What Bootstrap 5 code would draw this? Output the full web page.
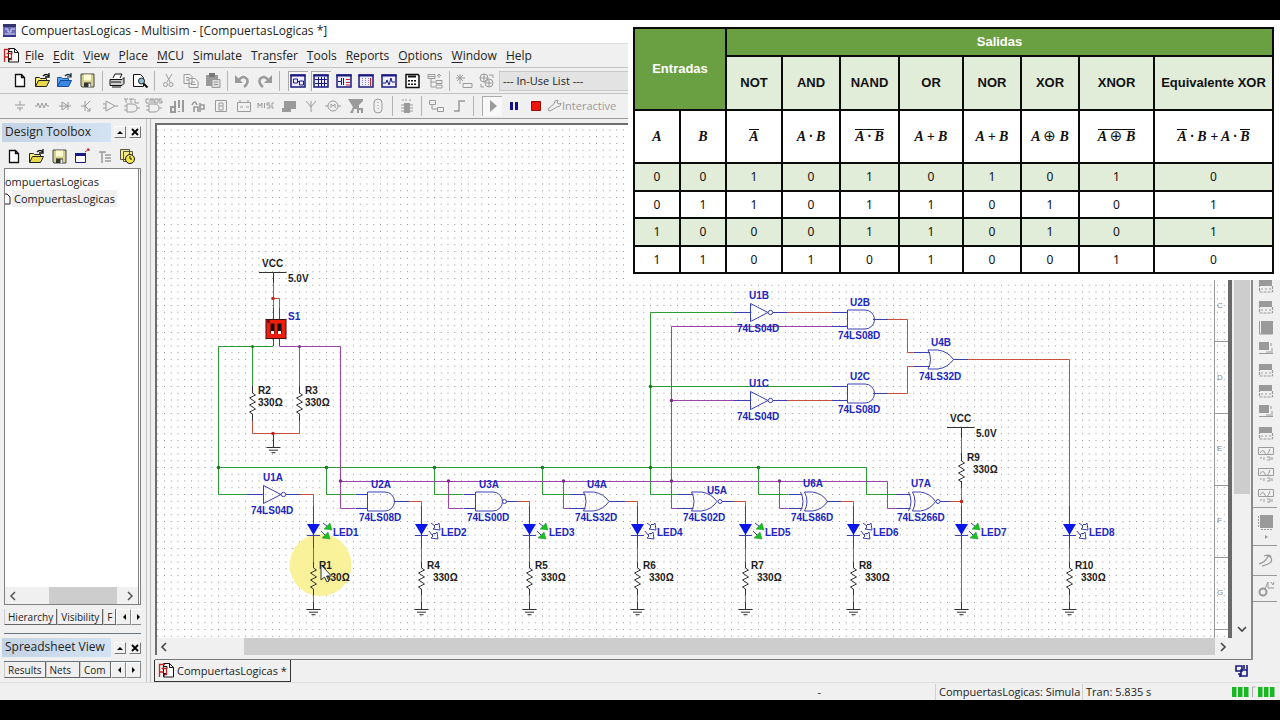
<!DOCTYPE html>
<html lang="es">
<head>
<meta charset="utf-8">
<meta name="viewport" content="width=device-width, initial-scale=1">
<title>CompuertasLogicas - Multisim</title>
<link rel="stylesheet" href="https://cdn.jsdelivr.net/npm/bootstrap@5.3.0/dist/css/bootstrap.min.css">
<style>
:root{--face:#f0f0f0;--edge:#a0a0a0;--dark:#6b6b6b}
body{background:#000;font:12px/16px "Open Sans","Noto Sans",sans-serif;color:#222;padding:20px 0}
button,select,.mnu a{font:inherit;color:inherit}
button{border:0;background:none;padding:0}
svg{display:block;flex:none}
.app{height:calc(100vh - 40px);background:var(--face)}
.titlebar{background:#fff;height:23px;gap:3px;padding:0 2px}
.mnu{height:26px;border-top:1px solid #ddd;border-bottom:1px solid #c4c4c4;padding-left:3px}
.mnu a{text-decoration:none;padding:0 4px 0 5px}
.mnu u{text-underline-offset:2px}
.bar1{height:26px;border-bottom:1px solid #c4c4c4}
.bar2{height:24px}
.tb{display:flex;align-items:center;justify-content:space-between;height:22px;flex:none}
.tb button{width:20px;height:20px;display:flex;align-items:center;justify-content:center}
.sep{width:1px;height:20px;background:#b4b4b4;flex:none}
.tb .down{box-shadow:inset 1px 1px 0 #aaa;background:#f8f8f8}
.ink{color:#111}.off{color:#9a9a9a}
.t4{width:88px;margin-left:10px}.t2{width:43px}.t3{width:64px}.t7{width:157px}.t17{width:378px;margin-left:10px}
.inuse{width:130px;height:20px;border:1px solid #c8c8c8;background:#e3e3e3;border-radius:0;font-size:11px;line-height:16px;padding:0 3px;margin-left:2px;appearance:none}
.work{border-top:1px solid #9c9c9c}
.fine{font-size:11px}
.dock{width:147px;flex:none;border-right:1px solid #c2c2c2;padding:4px 5px 0 4px}
.dock-title{height:19px;gap:3px}
.dock-title .cap{background:linear-gradient(90deg,#c3d3e4,#d3e3f4);height:19px;margin-left:-2px;padding-left:3px;line-height:18px}
.mini{width:12px;height:12px;background:var(--face);border:1px solid #fff;border-right-color:#777;border-bottom-color:#777;display:flex;align-items:center;justify-content:center}
.treebox{background:#fff;border:1px solid #808080;border-right:3px double #808080}
.tree{font-size:11px;line-height:17px;white-space:nowrap;overflow:hidden}
.tree span.sel{background:var(--face);padding:0 2px}
.hs{height:17px;background:var(--face);display:flex;align-items:center;flex:none}
.thumb{background:#cdcdcd}
.tabs{font-size:10px;line-height:14px}
.tabs button{height:16px;padding:0 3px;border:1px solid #666;border-top:0;border-left-color:#ccc;white-space:nowrap}
.arr{width:15px;height:14px;border:1px solid #fff!important;border-right-color:#888!important;border-bottom-color:#888!important;display:flex;align-items:center;justify-content:center;padding:0!important;flex:none}
.gut{width:4px;flex:none;border-right:1px solid #bbb}
.sheetbox{border:2px solid #6e6e6e;border-right:0;border-bottom:0;background:#fff;min-height:0}
.sheet{overflow:hidden;border-right:4px solid #6a6a6a}
.vs{width:19px;background:var(--face);flex:none}
.doc{border-right:2px solid #8a8a8a;min-width:0;margin-top:4px}
.doctab{border:1px solid #333!important;border-top:0!important;height:22px;padding:0 3px!important;gap:2px;width:137px;margin-left:-1px;display:flex;align-items:center}
.status{height:18px;border-top:1px solid #ddd}
.status div{border-left:1px solid #d0d0d0;height:16px;overflow:hidden;white-space:nowrap;padding-left:3px}
.rdock{width:27px;flex:none;padding-top:157px}
.rdock button{width:18px;height:21px;margin-left:4px;display:flex;align-items:center;justify-content:center;flex:none}
.rdock hr{margin:0 3px 1px 0;border-color:#999;opacity:1}
.truth{top:0;right:0;width:652px;height:260px;background:#fff;padding:7px 6px 0 5px}
.truth table{table-layout:fixed;width:641px;border-collapse:collapse;text-align:center}
.truth td,.truth th{border:2px solid #0a0a0a;padding:0;vertical-align:middle;color:#111}
.truth .hd{background:#6ba042;color:#fff}
.truth th{font:bold 13px/16px "Liberation Sans",Arial,sans-serif}
.truth .gate{background:#e2edd9;height:54px;white-space:nowrap}
.truth .fx th{height:53px;font:italic bold 14px/16px "Liberation Serif",serif}
.truth tbody td{height:27px;font:12px/16px "Noto Sans",sans-serif}
.truth tbody tr:nth-child(odd) td{background:#e2edd9;height:28px}
.ov{border-top:1px solid #111;display:inline-block;line-height:14px}
.truth i{font:normal 15px/13px "DejaVu Sans",sans-serif}
.sch text{font:bold 10px "Liberation Sans",Arial,sans-serif}
.k,.b,.r,.g,.p{fill:none}
.k{stroke:#333}.b{stroke:#3a40b0}.r{stroke:#c9503c}.g{stroke:#2c9c34}.p{stroke:#9c45a8}
.bt{fill:#2026c0}.kt{fill:#1c1c1c}
.sch .zone text{font:8px "Liberation Sans",Arial,sans-serif}
</style>
</head>
<body>
<svg width="0" height="0" class="position-absolute" aria-hidden="true">
<defs>
<g id="i-ms"><path d="M1 1h13v13H1z" fill="#6a6ab8"/><path d="M1 1l13 0v3H1z" fill="#34346c"/><path d="M3 6h3v3h3V6h4M3 11h10" stroke="#d8d8f4" fill="none"/><path d="M1 12h13v2H1z" fill="#34348c"/></g>
<g id="i-doc2"><path d="M5.500 1.500h6l4 4v9.500h-10zM11.500 1.500v4h4" fill="#fff" stroke="#111"/><path d="M1.500 15V2.500H7M3.500 6.500h5v6h-3M1.500 10h4" fill="none" stroke="#c22" stroke-width="1.300"/><path d="M6 4.500h3v2M6 14.500v-3h2" stroke="#111" fill="none"/></g>
<g id="i-new"><path d="M4.500 2.500h6l3 3v9h-9zM10.500 2.500v3h3" fill="#fff" stroke="#111" stroke-width="1.300"/></g>
<g id="i-open"><path d="M1.500 14.500v-9h4l1 1h6v2" fill="#f6ee80" stroke="#222"/><path d="M1.500 14.500l3-6h11l-3 6z" fill="#e9d94a" stroke="#222"/><path d="M9 4q3-3 6 0M15 1v4h-4" fill="none" stroke="#111" stroke-width="1.300"/></g>
<g id="i-openb"><path d="M1.500 14.500v-9h4l1 1h6v2" fill="#5aa2f0" stroke="#1558a8"/><path d="M1.500 14.500l3-6h11l-3 6z" fill="#3c86e4" stroke="#104c98"/><path d="M9 4q3-3 6 0M15 1v4h-4" fill="none" stroke="#123" stroke-width="1.200"/></g>
<g id="i-save"><path d="M2 2h13v13H3l-1-1z" fill="#d5d290" stroke="#444"/><path d="M5 2.500h7v6H5z" fill="#fffbd0"/><path d="M5 10.500h7V15H5z" fill="#333"/><path d="M9.500 11.500h2V15h-2z" fill="#eee"/></g>
<g id="i-print"><path d="M5 6l2-4h7l-2 4" fill="#fff" stroke="#111"/><path d="M2 7.500h12l2-2v6l-2 2H2z" fill="#ccc" stroke="#111"/><path d="M3 10h10M4 15h9" stroke="#111"/></g>
<g id="i-prev"><path d="M2.500 2.500h7l3 3v9h-10z" fill="#fff" stroke="#111"/><circle cx="10.500" cy="9" r="3" fill="#8cc0d4" stroke="#222"/><path d="M12.500 11.500l4 4" stroke="#111" stroke-width="2"/></g>
<g id="i-cut" fill="none" stroke="currentColor"><path d="M6 2l4 8M12 2l-5 8"/><circle cx="5.500" cy="12.500" r="2"/><circle cx="11" cy="12.500" r="2"/></g>
<g id="i-copy" fill="#f4f4f4" stroke="currentColor"><path d="M2 2.500h6l2 2v7H2zM7 6.500h6l3 3v6H7zM9 10h4M9 12.500h5M4 5.500h3M4 8h3"/></g>
<g id="i-paste"><path d="M2 3h12v11H2z" fill="currentColor"/><path d="M5 1h6v4H5z" fill="#777"/><path d="M8 7.500h8v8H8z" fill="#ddd" stroke="currentColor"/><path d="M10 10h4M10 12.500h4" stroke="currentColor"/></g>
<g id="i-undo"><path d="M5 9q5-7 9-2q2 4-3 8" fill="none" stroke="currentColor" stroke-width="2.500"/><path d="M2 3v8h8z" fill="currentColor"/></g>
<g id="i-w1"><path d="M2 3h14v12H2z" fill="#eef" stroke="#1a1a80" stroke-width="1.500"/><path d="M1.500 2.500h15v2h-15z" fill="#1a1a80"/></g>
<g id="i-calc"><path d="M3 2.500h12l1 1v12H3z" fill="#fff" stroke="#111" stroke-width="1.500"/><path d="M5 4.500h8" stroke="#111" stroke-width="2"/><path d="M5 8h2v1.500H5zM8 8h2v1.500H8zM11 8h2v1.500h-2zM5 11.500h2V13H5zM8 11.500h2V13H8zM11 11.500h2V13h-2z" fill="#111"/></g>
<g id="i-hier" fill="none" stroke="currentColor"><path d="M2 2.500h7v4H2zM2 4.500h7M5 7v8h4M5 10h4M10 8.500h6v3h-6zM10 13h6v3h-6zM13 6V2M11 4l2-2 2 2"/></g>
<g id="i-spark" fill="none" stroke="currentColor"><path d="M5 2v10M1 6h9M2 3l6 6M8 3L2 9M8 11.500h9v4H8z"/></g>
<g id="i-gear" fill="none" stroke="currentColor"><circle cx="6" cy="6" r="4"/><circle cx="11" cy="11" r="4"/><path d="M2 6h8M6 2v8M8 11h6M11 8v7M11 3h4v3M3 12v3h3"/></g>
<g id="i-and" fill="none" stroke="currentColor"><path d="M4 7h5q5 0 5 4t-5 4H4zM1 9h3M1 13h3M14 11h3"/></g>
<g id="res" class="k"><path d="M0 0l3 2-6 3 6 4-6 3 6 4-6 3 3 2"/></g>
<g id="gnd" class="k"><path d="M0 0V7.500M-7 7.500H7M-4.500 10.200H4.500M-2 12.700H2"/></g>
<g id="diode"><path class="b" d="M0-18V25M-6.500 11.500H6.500"/><path d="M-6.500 0H6.500L0 11z" style="fill:#0a16e8"/></g>
<g id="drop"><path class="r" d="M0 24V38"/><path class="k" d="M0 38V44M0 65V71"/><use href="#res" y="44"/><path class="r" d="M0 71V78"/><use href="#gnd" y="78"/></g>
<g id="on"><path class="b" d="M10-2l5 4M8 6l4 4"/><path d="M19 5l-8-1 6-6zM17 14l-8-1 6-6z" style="fill:#18c020;stroke:#0a7a20;stroke-width:.4"/></g>
<g id="off"><path class="b" d="M10-2l4 3M8 6l3 4M19 5l-7-1 2-2-1-1 2-2 1 1 2-2zM17 14l-7-1 2-2-1-1 2-2 1 1 2-2z"/></g>
<g id="not" class="b"><path d="M-17 0H0M0-9V9L17.500 0zM22.500 0H37"/><circle cx="20" cy="0" r="2.200" fill="#fff"/></g>
<g id="and" class="b"><path d="M-12-7H0M-12 7H0M0-9.500H17.500A9.500 9.500 0 0 1 17.500 9.500H0z"/></g>
<g id="or" class="b"><path d="M-14-7H2M-14 7H2M0-9.500H10Q20-8 25.500 0Q20 8 10 9.500H0Q5 0 0-9.500z"/></g>
<g id="xor" class="b"><path d="M-12-7H2M-12 7H2M4-9.500H12Q22-8 27 0Q22 8 12 9.500H4Q9 0 4-9.500zM0-9.500Q5 0 0 9.500"/></g>
<pattern id="dots" x="218" y="467" width="6.750" height="6.750" patternUnits="userSpaceOnUse"><rect width="1" height="1" fill="#909090"/></pattern>
<g id="ins"><path d="M2 3h13v6H2z" fill="currentColor"/><path d="M2.500 3v12h13M4 12h2M8 12h2M12 12h2M15.500 9v6" stroke="currentColor" fill="none" stroke-width="1.200" stroke-dasharray="3 1"/></g>
<g id="ins2"><path d="M2 2h10v8H2z" fill="currentColor"/><path d="M2 13.500h14M14 3v3M15 8v5M9 12h5" stroke="currentColor" fill="none"/></g>
<g id="ins3" fill="none" stroke="currentColor"><path d="M1.500 2.500h15v7h-15zM3 8q3-5 5 0t5-4M3 13h2M7 12v3M10 12h3v3h-3M15 12v3"/></g>
</defs></svg>

<div class="app d-flex flex-column position-relative overflow-hidden">
<header class="titlebar d-flex align-items-center"><svg width="16" height="16"><use href="#i-ms"/></svg><span>CompuertasLogicas - Multisim - [CompuertasLogicas *]</span></header>
<nav class="mnu d-flex align-items-center"><svg width="17" height="17"><use href="#i-doc2"/></svg>
<a href="#"><u>F</u>ile</a><a href="#"><u>E</u>dit</a><a href="#"><u>V</u>iew</a><a href="#"><u>P</u>lace</a><a href="#"><u>M</u>CU</a><a href="#"><u>S</u>imulate</a><a href="#">Tra<u>n</u>sfer</a><a href="#"><u>T</u>ools</a><a href="#"><u>R</u>eports</a><a href="#"><u>O</u>ptions</a><a href="#"><u>W</u>indow</a><a href="#"><u>H</u>elp</a></nav>

<div class="bar1 d-flex align-items-center">
<div class="tb t4 ink"><button aria-label="New"><svg width="18" height="18"><use href="#i-new"/></svg></button><button aria-label="Open"><svg width="18" height="18"><use href="#i-open"/></svg></button><button aria-label="Open sample"><svg width="18" height="18"><use href="#i-openb"/></svg></button><button aria-label="Save"><svg width="18" height="18"><use href="#i-save"/></svg></button></div>
<span class="sep mx-1"></span>
<div class="tb t2 ink"><button aria-label="Print"><svg width="18" height="18"><use href="#i-print"/></svg></button><button aria-label="Preview"><svg width="18" height="18"><use href="#i-prev"/></svg></button></div>
<span class="sep ms-1 me-1"></span>
<div class="tb t3 off"><button aria-label="Cut"><svg width="18" height="18"><use href="#i-cut"/></svg></button><button aria-label="Copy"><svg width="18" height="18"><use href="#i-copy"/></svg></button><button aria-label="Paste"><svg width="18" height="18"><use href="#i-paste"/></svg></button></div>
<span class="sep mx-1"></span>
<div class="tb t2 off"><button aria-label="Undo"><svg width="18" height="18"><use href="#i-undo"/></svg></button><button aria-label="Redo"><svg width="18" height="18"><use href="#i-undo" transform="matrix(-1 0 0 1 18 0)"/></svg></button></div>
<span class="sep ms-1 me-2"></span>
<div class="tb t7 ink"><button class="down" aria-label="Design toolbox"><svg width="18" height="18"><use href="#i-w1"/><path d="M4.500 7h4v4h-4zM10.500 9h4v4h-4zM8 9.500h2" fill="none" stroke="#1a1a80"/></svg></button><button class="down" aria-label="Spreadsheet"><svg width="18" height="18"><use href="#i-w1"/><path d="M3 7.500h12M3 11.500h12M6.500 5v10M9.500 5v10M12.500 5v10" stroke="#1a1a80"/></svg></button><button aria-label="Netlist"><svg width="18" height="18"><use href="#i-w1"/><path d="M3 9.500h3M6.500 6v7M8.500 6v7" stroke="#1a1a80"/><path d="M11 7.500h4M11 10.500h4M11 13h4" stroke="#c22"/></svg></button><button aria-label="Grapher"><svg width="18" height="18"><use href="#i-w1"/><path d="M5.500 6v8M8.500 6v8M11.500 6v8" stroke="#88b" stroke-dasharray="1 1"/><path d="M13.500 6v8" stroke="#c22"/></svg></button><button aria-label="Postprocessor"><svg width="18" height="18"><use href="#i-w1"/><path d="M3 11h3l1-3 2 5 2-7 1 4h3" fill="none" stroke="#1a1a80"/></svg></button><button aria-label="Calculator"><svg width="18" height="18"><use href="#i-calc"/></svg></button><button class="off" aria-label="Parent sheet"><svg width="18" height="18"><use href="#i-hier"/></svg></button></div>
<span class="sep mx-1"></span>
<div class="tb t2 off"><button aria-label="Component wizard"><svg width="18" height="18"><use href="#i-spark"/></svg></button><button aria-label="Database manager"><svg width="18" height="18"><use href="#i-gear"/></svg></button></div>
<select class="inuse" aria-label="In-Use List"><option>--- In-Use List ---</option></select>
</div>

<div class="bar2 d-flex align-items-center off">
<div class="tb t17">
<button aria-label="Source"><svg width="18" height="18"><path d="M9 4v4M4 8h10M6 11h6M9 11v3" stroke="currentColor" fill="none"/></svg></button>
<button aria-label="Basic"><svg width="18" height="18"><path d="M2 9h2l1-3 2 5 2-5 2 5 2-5 1 3h2" stroke="currentColor" fill="none"/></svg></button>
<button aria-label="Diode"><svg width="18" height="18"><path d="M3 9h12M6 5v8l6-4zM12 5v8" stroke="currentColor" fill="none"/></svg></button>
<button aria-label="Transistor"><svg width="18" height="18"><path d="M3 9h4M7 4v10M7 9l5-5M7 9l5 5M12 11v3h-3" stroke="currentColor" fill="none"/></svg></button>
<button aria-label="Analog"><svg width="18" height="18"><path d="M5 4v10l9-5zM2 7h3M2 11h3M14 9h3" stroke="currentColor" fill="none"/></svg></button>
<button aria-label="TTL"><svg width="18" height="18"><path d="M1 2h4M3 2v4M6 2h5M8 2v4M12 2v4h4" stroke="currentColor" fill="none"/><use href="#i-and"/></svg></button>
<button aria-label="CMOS"><svg width="18" height="18"><path d="M1 2v4h3M1 2h3M5 6V2h4v4M7 2v4M10 2h3v4h-3zM17 2h-3v2h3v2h-3" stroke="currentColor" fill="none"/><use href="#i-and"/></svg></button>
<button aria-label="Misc digital"><svg width="18" height="18"><path d="M3 15v-5h4v5zM7 15V4M11 3v8M11 15v-1M15 3v12" stroke="currentColor" fill="none" stroke-width="2"/></svg></button>
<button aria-label="Mixed"><svg width="18" height="18"><path d="M2 8q3-6 5 0M4 15v-5h4v5M10 6v9M10 8h4v4h-4" stroke="currentColor" fill="none" stroke-width="1.600"/></svg></button>
<button aria-label="Indicator"><svg width="18" height="18"><path d="M3.500 3.500h11v11h-11zM7 6h4v3H7zM7 9v4h4V9" stroke="currentColor" fill="none"/></svg></button>
<button aria-label="Power"><svg width="18" height="18"><path d="M2.500 5.500h13v9h-13zM5 3v2M13 3v2M5 10h3M11 10h3" stroke="currentColor" fill="none"/></svg></button>
<button aria-label="Misc"><svg width="18" height="18"><path d="M1 11V6l2 3 2-3v5M7.500 6v5M13 6h-3v2h3v3h-3M17 6h-2v5h2" stroke="currentColor" fill="none"/></svg></button>
<button aria-label="Peripherals"><svg width="18" height="18"><path d="M4 4h12v8H4zM2 11h9v4H2z" fill="currentColor"/></svg></button>
<button aria-label="RF"><svg width="18" height="18"><path d="M9 15V4M4 4l5 6 5-6" stroke="currentColor" fill="none"/></svg></button>
<button aria-label="Electromechanical"><svg width="18" height="18"><circle cx="9" cy="9" r="5" fill="none" stroke="currentColor"/><path d="M1 9h3M14 9h3M7 11V7l2 2 2-2v4" stroke="currentColor" fill="none"/></svg></button>
<button aria-label="NI"><svg width="18" height="18"><path d="M1 2h15v2l-4 4v3h4v5h-2v-3h-2v3h-2v-4H7l-1 4H3l3-6z" fill="currentColor"/></svg></button>
<button aria-label="Connector"><svg width="18" height="18"><path d="M9 2q-4 0-4 4v6q0 4 4 4t4-4V6q0-4-4-4zM9 5v1M9 8v1M9 11v1" stroke="currentColor" fill="none"/></svg></button>
</div>
<span class="sep mx-1"></span>
<div class="tb"><button aria-label="MCU"><svg width="18" height="18"><path d="M6 6h6v10H6z" fill="currentColor"/><path d="M3 8h12M3 11h12M3 14h12M5 2v2M8 2v2M12 2v2" stroke="currentColor"/></svg></button></div>
<span class="sep mx-1"></span>
<div class="tb t2"><button aria-label="Hierarchical block"><svg width="18" height="18"><path d="M2.500 3.500h6v4h-6zM10.500 10.500h6v4h-6zM5 8v4h5" fill="none" stroke="currentColor"/></svg></button><button aria-label="Bus"><svg width="18" height="18"><path d="M4 14h5V4h6" fill="none" stroke="currentColor" stroke-width="1.500"/></svg></button></div>
<span class="sep ms-1 me-2"></span>
<div class="tb t3"><button class="down" aria-label="Run"><svg width="18" height="18"><path d="M7 3l7 6-7 6z" fill="currentColor"/></svg></button><button aria-label="Pause"><svg width="18" height="18"><path d="M5 5h3v8H5zM10 5h3v8h-3z" fill="#12128c"/></svg></button><button aria-label="Stop"><svg width="18" height="18"><path d="M4.500 4.500h9v9h-9z" fill="#f21408" stroke="#8c1008"/></svg></button></div>
<button class="d-flex align-items-center fine"><svg width="16" height="16"><path d="M4 13l-2-1 1-2 5-4q0-4 4-4l-1 3 2 1 2-1q0 4-4 4z" fill="none" stroke="currentColor"/></svg>Interactive</button>
</div>

<main class="work d-flex flex-grow-1" style="min-height:0">
<aside class="dock d-flex flex-column">
<div class="dock-title d-flex align-items-center"><span class="cap flex-grow-1">Design Toolbox</span><button class="mini" aria-label="Collapse"><svg width="6" height="4"><path d="M0 4l3-3 3 3z"/></svg></button><button class="mini" aria-label="Close"><svg width="8" height="8"><path d="M1 1l6 6M7 1L1 7" stroke="#000" stroke-width="1.800"/></svg></button></div>
<div class="tb ink mt-1" style="width:134px"><button aria-label="New design"><svg width="18" height="18"><use href="#i-new"/></svg></button><button aria-label="Open design"><svg width="18" height="18"><use href="#i-open"/></svg></button><button aria-label="Save design"><svg width="18" height="18"><use href="#i-save"/></svg></button><button aria-label="Close design"><svg width="18" height="18"><path d="M2.500 5.500h10v9h-10z" fill="#fff" stroke="#1a1a80"/><path d="M2 5h11v3H2z" fill="#1a1a80"/><path d="M12 4l4-3M14 1h2v2" stroke="#c22"/></svg></button><button class="off" aria-label="Rename"><svg width="18" height="18"><path d="M3 4h7M6 4v11M9 7h6M9 10h6M9 13h6" stroke="currentColor" fill="none" stroke-width="1.500"/></svg></button><button aria-label="History"><svg width="18" height="18"><path d="M1.500 1.500h9v10h-9zM4.500 3.500h9v10h-9z" fill="#f4ec8a" stroke="#554"/><circle cx="11" cy="11" r="4.500" fill="#f7e94a" stroke="#111"/><path d="M11 8v3h2" stroke="#111" fill="none"/></svg></button></div>
<div class="treebox flex-grow-1 d-flex flex-column">
<div class="tree flex-grow-1 pt-1"><div>ompuertasLogicas</div><div class="d-flex"><svg width="7" height="17"><path d="M0 4h2l3 3v7H0" fill="none" stroke="#222"/></svg><span class="sel">CompuertasLogicas</span></div></div>
<div class="hs"><button aria-label="Left"><svg width="16" height="15"><path d="M10 4L6 8l4 4" fill="none" stroke="#555" stroke-width="1.500"/></svg></button><span class="thumb h-100" style="width:68px;margin:0 auto 0 28px"></span><button aria-label="Right"><svg width="16" height="15"><path d="M6 4l4 4-4 4" fill="none" stroke="#555" stroke-width="1.500"/></svg></button></div>
</div>
<div class="tabs d-flex overflow-hidden mt-1"><button>Hierarchy</button><button>Visibility</button><button class="flex-grow-1 text-start">F</button><button class="arr" aria-label="Previous tab"><svg width="4" height="6"><path d="M4 0v6L1 3z"/></svg></button><button class="arr" aria-label="Next tab"><svg width="4" height="6"><path d="M0 0v6l3-3z"/></svg></button></div>
<div class="border-bottom border-secondary mt-2 mb-1" style="height:1px"></div>
<div class="dock-title d-flex align-items-center"><span class="cap flex-grow-1">Spreadsheet View</span><button class="mini" aria-label="Collapse view"><svg width="6" height="4"><path d="M0 4l3-3 3 3z"/></svg></button><button class="mini" aria-label="Close view"><svg width="8" height="8"><path d="M1 1l6 6M7 1L1 7" stroke="#000" stroke-width="1.800"/></svg></button></div>
<div class="tabs d-flex overflow-hidden mt-1 mb-1 border-top border-secondary"><button>Results</button><button class="pe-2">Nets</button><button class="flex-grow-1 text-start">Com</button><button class="arr" aria-label="Previous view"><svg width="4" height="6"><path d="M4 0v6L1 3z"/></svg></button><button class="arr" aria-label="Next view"><svg width="4" height="6"><path d="M0 0v6l3-3z"/></svg></button></div>
</aside>
<div class="gut"></div>
<section class="d-flex flex-column flex-grow-1 ps-1" style="min-width:0">
<div class="doc d-flex flex-column flex-grow-1" style="min-height:0">
<div class="sheetbox d-flex flex-grow-1">
<div class="sheet flex-grow-1">
<svg class="sch" width="1072" height="520" viewBox="157 125 1072 520">
<rect x="157" y="125" width="1072" height="520" fill="url(#dots)"/>
<circle cx="320.500" cy="565" r="31" fill="#f9f29b"/>
<path d="M1214.500 125V645M1214 341.500h15M1214 413.500h15M1214 485.500h15M1214 557.500h15M1214 629.500h15" stroke="#999"/>
<g class="zone" fill="#888"><text x="1217" y="308">C</text><text x="1217" y="380">D</text><text x="1217" y="451">E</text><text x="1217" y="523">F</text><text x="1217" y="595">G</text></g>
<!-- input nets -->
<path class="g" d="M273 346.500H218.500V494.500H247M252.500 346V386M218 467.500H866.500V494.500H897M326.500 467V494.500H355M434.500 467V494.500H463M542.500 467V494.500H570M650.500 494.500V312.500H734M650.500 494.500H678M758.500 467V494.500H788M650.500 386.500H835"/>
<path class="p" d="M279.500 346.500H340.500V508.500H355M299.500 346V386M340 481.500H887.500V508.500H897M448.500 481V508.500H463M563.500 481V508.500H570M671.500 508.500V326.500H835M671.500 508.500H678M779.500 481V508.500H788M671.500 400.500H734"/>
<!-- power net -->
<path class="r" d="M273.500 283V310M273.500 298.500H279.500V310M252.500 420V433.500H299.500V420M300 494.500H313.500V506M409 501.500H421.500V508M517 501.500H529.500V508M625 501.500H637.500V508M733 501.500H745.500V508M841 501.500H853.500V508M949 501.500H961.500M961.500 438V453M961.500 487V508M961.500 548V602M787 312.500H835M787 400.500H835M888 319.500H907.500V352.500H914M888 393.500H907.500V366.500H914M968 359.500H1069.500V508"/>
<path class="k" d="M259 272.500H286.500M273.500 272V283M273.500 433V440M252.500 386V393M299.500 386V393M252.500 414V421M299.500 414V421M947 427.500H974.500M961.500 427V438M961.500 453V461M961.500 481V488"/>
<path class="b" d="M273.500 308V320M279.500 308V320M273.500 338V346M279.500 338V346M394 501.500H409M506 501.500H517M609 501.500H625M722 501.500H733M827 501.500H841M940 501.500H950M873 319.500H888M873 393.500H888M953 359.500H968M832 312.500H848M832 326.500H848M832 386.500H848M832 400.500H848"/>
<use href="#res" x="252.500" y="393"/><use href="#res" x="299.500" y="393"/><use href="#res" x="961.500" y="461"/><use href="#gnd" x="273.500" y="440"/><use href="#gnd" x="961.500" y="602"/>
<g fill="#157a22"><circle cx="218.500" cy="467.500" r="1.800"/><circle cx="252.500" cy="346.500" r="1.500"/><circle cx="326.500" cy="467.500" r="1.800"/><circle cx="434.500" cy="467.500" r="1.800"/><circle cx="542.500" cy="467.500" r="1.800"/><circle cx="650.500" cy="467.500" r="1.800"/><circle cx="758.500" cy="467.500" r="1.800"/><circle cx="650.500" cy="386.500" r="1.800"/></g>
<g fill="#7b2c88"><circle cx="299.500" cy="346.500" r="1.500"/><circle cx="340.500" cy="481" r="1.800"/><circle cx="448.500" cy="481" r="1.800"/><circle cx="563.500" cy="481" r="1.800"/><circle cx="671.500" cy="481" r="1.800"/><circle cx="779.500" cy="481" r="1.800"/><circle cx="671.500" cy="400.500" r="1.800"/></g>
<g fill="#c62418"><circle cx="273" cy="298.500" r="1.800"/><circle cx="273" cy="433.500" r="1.800"/><circle cx="961.500" cy="501.500" r="1.800"/></g>
<rect x="266" y="319.500" width="20" height="19" fill="#f01c0c" stroke="#401010"/><path d="M270.500 323.500h4v10h-4zM277.500 323.500h4v10h-4z" style="fill:#111"/><path d="M271 331h3v3h-3zM278 331h3v3h-3z" style="fill:#fff"/><circle cx="268.500" cy="321.500" r="1.500" fill="#500"/>
<!-- gates -->
<use href="#not" x="263.500" y="494.500"/><use href="#and" x="367.500" y="501.500"/><use href="#and" x="475.500" y="501.500"/><use href="#or" x="583.500" y="501.500"/><use href="#or" x="691.500" y="501.500"/><use href="#xor" x="800.500" y="501.500"/><use href="#xor" x="908.500" y="501.500"/>
<use href="#not" x="750.500" y="312.500"/><use href="#not" x="750.500" y="400.500"/><use href="#and" x="847.500" y="319.500"/><use href="#and" x="847.500" y="393.500"/><use href="#or" x="928" y="359.500"/>
<g fill="#fff" stroke="#3a40b0"><circle cx="504.500" cy="501.500" r="2"/><circle cx="720" cy="501.500" r="2"/><circle cx="938" cy="501.500" r="2"/></g>
<!-- indicator columns -->
<use href="#diode" x="313.500" y="524"/><use href="#diode" x="421.500" y="524"/><use href="#diode" x="529.500" y="524"/><use href="#diode" x="637.500" y="524"/><use href="#diode" x="745.500" y="524"/><use href="#diode" x="853.500" y="524"/><use href="#diode" x="961.500" y="524"/><use href="#diode" x="1069.500" y="524"/>
<use href="#drop" x="313.500" y="524"/><use href="#drop" x="421.500" y="524"/><use href="#drop" x="529.500" y="524"/><use href="#drop" x="637.500" y="524"/><use href="#drop" x="745.500" y="524"/><use href="#drop" x="853.500" y="524"/><use href="#drop" x="1069.500" y="524"/>
<use href="#on" x="313" y="525"/><use href="#off" x="421" y="525"/><use href="#on" x="529" y="525"/><use href="#off" x="637" y="525"/><use href="#on" x="745" y="525"/><use href="#off" x="853" y="525"/><use href="#on" x="961" y="525"/><use href="#off" x="1069" y="525"/>
<g class="bt"><text x="288" y="320">S1</text><text x="263" y="481">U1A</text><text x="251" y="514">74LS04D</text><text x="371" y="488">U2A</text><text x="359" y="521">74LS08D</text><text x="479" y="488">U3A</text><text x="467" y="521">74LS00D</text><text x="587" y="488">U4A</text><text x="575" y="521">74LS32D</text><text x="707" y="494">U5A</text><text x="683" y="521">74LS02D</text><text x="803" y="487">U6A</text><text x="791" y="521">74LS86D</text><text x="911" y="487">U7A</text><text x="897" y="521">74LS266D</text>
<text x="749" y="299">U1B</text><text x="737" y="332">74LS04D</text><text x="850" y="306">U2B</text><text x="838" y="339">74LS08D</text><text x="931" y="346">U4B</text><text x="919" y="380">74LS32D</text><text x="850" y="380">U2C</text><text x="838" y="413">74LS08D</text><text x="749" y="387">U1C</text><text x="737" y="420">74LS04D</text>
<text x="333" y="536">LED1</text><text x="441" y="536">LED2</text><text x="549" y="536">LED3</text><text x="657" y="536">LED4</text><text x="765" y="536">LED5</text><text x="873" y="536">LED6</text><text x="981" y="536">LED7</text><text x="1089" y="536">LED8</text></g>
<g class="kt"><text x="262" y="267">VCC</text><text x="288" y="282">5.0V</text><text x="258" y="394">R2</text><text x="258" y="406">330Ω</text><text x="305" y="394">R3</text><text x="305" y="406">330Ω</text><text x="950" y="422">VCC</text><text x="976" y="437">5.0V</text><text x="967" y="461">R9</text><text x="973" y="473">330Ω</text>
<text x="319" y="569">R1</text><text x="325" y="581">330Ω</text><text x="427" y="569">R4</text><text x="433" y="581">330Ω</text><text x="535" y="569">R5</text><text x="541" y="581">330Ω</text><text x="643" y="569">R6</text><text x="649" y="581">330Ω</text><text x="751" y="569">R7</text><text x="757" y="581">330Ω</text><text x="859" y="569">R8</text><text x="865" y="581">330Ω</text><text x="1075" y="569">R10</text><text x="1081" y="581">330Ω</text></g>
<path d="M321 565v15l3.500-3 2.500 5 2-1-2.500-5h5z" style="fill:#fff;stroke:#333"/>
</svg>
</div>
<div class="vs d-flex flex-column"><span class="thumb mx-auto" style="width:16px;height:72%"></span><button class="mt-auto mx-auto" aria-label="Scroll down"><svg width="16" height="18"><path d="M4 7l4 4 4-4" fill="none" stroke="#444" stroke-width="1.600"/></svg></button></div>
</div>
<div class="hs border-bottom-0" style="border-left:2px solid #6e6e6e"><button aria-label="Scroll left"><svg width="16" height="15"><path d="M9 4L5 8l4 4" fill="none" stroke="#444" stroke-width="1.600"/></svg></button><span class="thumb h-100 flex-grow-1" style="margin:0 2px 0 71px"></span><button aria-label="Scroll right" class="me-4"><svg width="10" height="15"><path d="M4 4l4 4-4 4" fill="none" stroke="#444" stroke-width="1.600"/></svg></button></div>
<div style="height:5px;border-bottom:1px solid #777;flex:none"></div>
</div>
<div class="d-flex align-items-center"><button class="doctab fine"><svg width="17" height="17"><use href="#i-doc2"/></svg><span class="text-nowrap">CompuertasLogicas *</span></button><svg class="ms-auto me-1" width="14" height="14"><path d="M1 2h6v5H1zM6 6h6v6H6zM9 1v4M12 1v5M3 10h2v3" fill="none" stroke="#1a1a80" stroke-width="1.600"/></svg></div>
</section>
<aside class="rdock off d-flex flex-column">
<button aria-label="Multimeter"><svg width="18" height="18"><use href="#ins"/></svg></button><button aria-label="Function generator"><svg width="18" height="18"><use href="#ins"/></svg></button><button aria-label="Wattmeter"><svg width="18" height="18"><path d="M4 2h12v13H4z" fill="currentColor"/><path d="M2.500 2v13h13" stroke="#999" fill="none"/></svg></button><button aria-label="Oscilloscope"><svg width="18" height="18"><use href="#ins2"/></svg></button><button aria-label="Bode plotter"><svg width="18" height="18"><use href="#ins"/></svg></button><button aria-label="Counter"><svg width="18" height="18"><use href="#ins"/></svg></button><button aria-label="Word generator"><svg width="18" height="18"><use href="#ins2"/></svg></button><button aria-label="Logic analyzer"><svg width="18" height="18"><use href="#ins"/></svg></button><button aria-label="Agilent"><svg width="18" height="18"><use href="#ins3"/></svg></button><button aria-label="Agilent scope"><svg width="18" height="18"><use href="#ins3"/></svg></button><button aria-label="Tektronix"><svg width="18" height="18"><use href="#ins3"/></svg></button>
<hr><button style="height:36px" aria-label="LabVIEW"><svg width="18" height="30"><path d="M3 3h13v13H3z" fill="currentColor"/><path d="M1.500 4v12M4 17.500h12" stroke="currentColor" stroke-dasharray="2 1"/><path d="M8 23l3 2-3 2z" fill="currentColor"/></svg></button>
<hr><button style="height:28px" aria-label="ELVIS"><svg width="18" height="18"><path d="M2 12q6-2 8-6t4 0-3 6-6 2M7 4q6-2 7 1" stroke="currentColor" fill="none" stroke-width="1.300"/></svg></button>
<hr><button style="height:24px" aria-label="Probe"><svg width="18" height="18"><circle cx="6" cy="12" r="3.500" fill="none" stroke="currentColor" stroke-width="2"/><path d="M8 9l3-7v6h6M14 2l2 3 1-3" stroke="currentColor" fill="none"/></svg></button><hr>
</aside>
</main>
<footer class="status fine d-flex align-items-center"><span class="flex-grow-1 text-end" style="padding-right:114px">-</span><div style="width:147px">CompuertasLogicas: Simula</div><div style="width:146px">Tran: 5.835 s</div><svg width="52" height="14"><path d="M4 2h4.500v10H4zM10 2h4.500v10H10zM16 2h4.500v10H16zM30 2h4.500v10H30zM36 2h4.500v10H36zM42 2h4.500v10H42z" fill="#19b822"/><path d="M24.500 12V2h3" stroke="#aaa" fill="none"/></svg></footer>

<div class="truth position-absolute">
<table><colgroup><col style="width:46px"><col style="width:46px"><col style="width:56px"><col style="width:58px"><col style="width:59px"><col style="width:64px"><col style="width:58px"><col style="width:58px"><col style="width:75px"><col></colgroup>
<thead>
<tr><th class="hd" colspan="2" rowspan="2">Entradas</th><th class="hd" colspan="8" style="height:28px">Salidas</th></tr>
<tr><th class="gate">NOT</th><th class="gate">AND</th><th class="gate">NAND</th><th class="gate">OR</th><th class="gate">NOR</th><th class="gate">XOR</th><th class="gate">XNOR</th><th class="gate">Equivalente XOR</th></tr>
<tr class="fx"><th>A</th><th>B</th><th><span class="ov">A</span></th><th>A · B</th><th><span class="ov">A · B</span></th><th>A + B</th><th>A + B</th><th>A <i>⊕</i> B</th><th><span class="ov">A <i>⊕</i> B</span></th><th><span class="ov">A</span> · B + A · <span class="ov">B</span></th></tr>
</thead><tbody>
<tr><td>0</td><td>0</td><td>1</td><td>0</td><td>1</td><td>0</td><td>1</td><td>0</td><td>1</td><td>0</td></tr>
<tr><td>0</td><td>1</td><td>1</td><td>0</td><td>1</td><td>1</td><td>0</td><td>1</td><td>0</td><td>1</td></tr>
<tr><td>1</td><td>0</td><td>0</td><td>0</td><td>1</td><td>1</td><td>0</td><td>1</td><td>0</td><td>1</td></tr>
<tr><td>1</td><td>1</td><td>0</td><td>1</td><td>0</td><td>1</td><td>0</td><td>0</td><td>1</td><td>0</td></tr>
</tbody></table>
</div>
</div>
<script src="https://cdn.jsdelivr.net/npm/bootstrap@5.3.0/dist/js/bootstrap.bundle.min.js"></script>
</body>
</html>
